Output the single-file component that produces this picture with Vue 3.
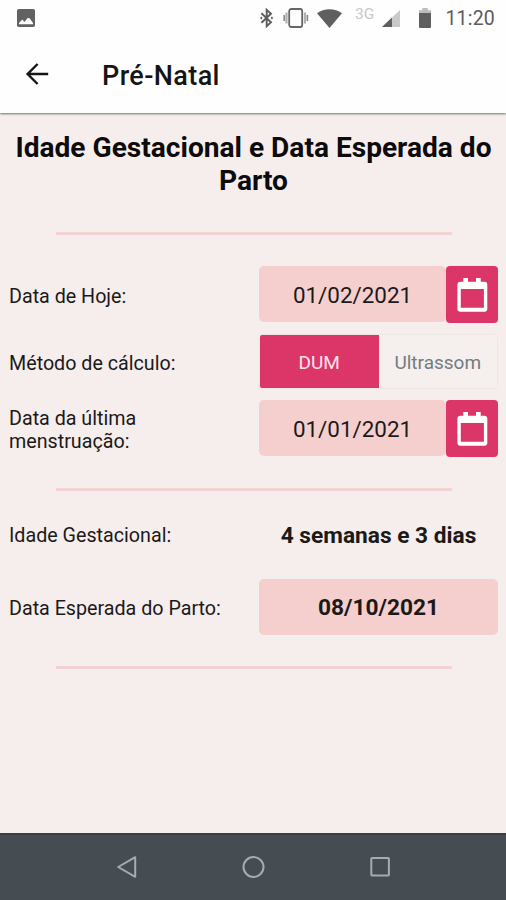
<script setup>
import { ref } from "vue";

const methods = ["DUM", "Ultrassom"];
const method = ref("DUM");

const today = ref("01/02/2021");
const lastPeriod = ref("01/01/2021");
const age = "4 semanas e 3 dias";
const dueDate = "08/10/2021";
</script>

<template>
  <div class="screen">
    <header class="top">
      <div class="status">
        <svg class="photo" width="18" height="18" viewBox="0 0 18 18">
          <rect width="18" height="18" rx="1.8" fill="#626262" />
          <path d="M2 15.3V14l3.3-3.5 2.2 2.5L10.6 9l2 .3L16 14v1.3z" fill="#fff" />
        </svg>
        <svg class="bluetooth" width="14" height="20" viewBox="0 0 14 20">
          <path
            d="M1.4 5.2l9.6 9.1L6.7 18.2V1.8L11 5.7l-9.6 9.1"
            fill="none"
            stroke="#5c5c5c"
            stroke-width="1.9"
          />
          <path d="M0 10l1.3-1.4L2.6 10l-1.3 1.4zM10.6 10l1.3-1.4 1.3 1.4-1.3 1.4z" fill="#5c5c5c" />
        </svg>
        <svg class="vibrate" width="26" height="20" viewBox="0 0 26 20">
          <rect x="6.2" y="1" width="13" height="18" rx="2" fill="none" stroke="#666" stroke-width="1.8" />
          <path d="M3.5 4.5v11M22 4.5v11" stroke="#b0b0b0" stroke-width="2.2" />
          <path d="M1.2 7v6M24.4 7v6" stroke="#888" stroke-width="1.6" />
        </svg>
        <svg class="wifi" width="25" height="19" viewBox="0 0 25 19">
          <path d="M0 4.2Q5.5.3 12.5.3T25 4.2L12.5 19z" fill="#5f5f5f" />
        </svg>
        <span class="network">3G</span>
        <svg class="signal" width="18" height="17" viewBox="0 0 18 17">
          <path d="M0 17L18 0v17z" fill="#c9c9c9" />
          <path d="M0 17L10 7.5V17z" fill="#5f5f5f" />
        </svg>
        <svg class="battery" width="12" height="20" viewBox="0 0 12 20">
          <path d="M0 2.2h3.2V0h5.6v2.2H12V6H0z" fill="#bdbdbd" />
          <path d="M0 5h12v13.8q0 1.2-1.2 1.2H1.2Q0 20 0 18.8z" fill="#5f5f5f" />
        </svg>
        <span class="clock">11:20</span>
      </div>
      <div class="toolbar">
        <svg width="24" height="24" viewBox="0 0 24 24">
          <path
            d="M23.2 12H2.6M12.6 2L2.6 12l10 10"
            fill="none"
            stroke="#151515"
            stroke-width="2.4"
          />
        </svg>
        <span class="title">Pré-Natal</span>
      </div>
    </header>

    <main>
      <h1>Idade Gestacional e Data Esperada do Parto</h1>
      <hr />
      <section class="inputs">
        <div class="row">
          <label>Data de Hoje:</label>
          <div class="date">
            <span class="value">{{ today }}</span>
            <button class="pick">
              <svg width="31" height="34" viewBox="0 0 31 34">
                <path
                  fill-rule="evenodd"
                  d="M6.3 0H11v3.8h8V0h4.7v3.8h3.6q3 0 3 3v24q0 3-3 3H3.4q-3 0-3-3v-24q0-3 3-3h2.9zM3.8 11v18.8h23.1V11z"
                  fill="#fff"
                />
              </svg>
            </button>
          </div>
        </div>
        <div class="row">
          <label>Método de cálculo:</label>
          <div class="segment">
            <button
              v-for="m in methods"
              :key="m"
              :class="['option', m === method ? 'active' : '']"
              @click="method = m"
            >
              {{ m }}
            </button>
          </div>
        </div>
        <div class="row">
          <label>Data da última menstruação:</label>
          <div class="date">
            <span class="value">{{ lastPeriod }}</span>
            <button class="pick">
              <svg width="31" height="34" viewBox="0 0 31 34">
                <path
                  fill-rule="evenodd"
                  d="M6.3 0H11v3.8h8V0h4.7v3.8h3.6q3 0 3 3v24q0 3-3 3H3.4q-3 0-3-3v-24q0-3 3-3h2.9zM3.8 11v18.8h23.1V11z"
                  fill="#fff"
                />
              </svg>
            </button>
          </div>
        </div>
      </section>
      <hr />
      <section class="results">
        <div class="row">
          <label>Idade Gestacional:</label>
          <strong>{{ age }}</strong>
        </div>
        <div class="row">
          <label>Data Esperada do Parto:</label>
          <strong class="due">{{ dueDate }}</strong>
        </div>
      </section>
      <hr />
    </main>

    <nav>
      <svg width="22" height="24" viewBox="0 0 22 24">
        <path d="M20.2 2.2v19.6L3.2 12z" />
      </svg>
      <svg width="24" height="24" viewBox="0 0 24 24">
        <circle cx="12.5" cy="12" r="10" />
      </svg>
      <svg width="22" height="24" viewBox="0 0 22 24">
        <rect x="2.3" y="3" width="17.6" height="17.6" rx="0.8" />
      </svg>
    </nav>
  </div>
</template>

<style>
body {
  margin: 0;
}
</style>

<style scoped>
.screen {
  display: flex;
  flex-direction: column;
  height: 900px;
  background-color: #f6eeec;
  color: #1c1919;
  font-family: Roboto, "Liberation Sans", sans-serif;
}

.screen svg {
  display: block;
  flex: none;
}

.top {
  height: 113px;
  background-color: #fefefe;
  box-shadow: 0 1px 2px #0008;
}

.status {
  display: flex;
  align-items: center;
  height: 36px;
  padding: 0 11px 0 17px;
}

.photo {
  margin-right: 225px;
}

.vibrate {
  margin-left: 9px;
}

.wifi {
  margin-left: 8px;
}

.network {
  width: 20px;
  margin: 0 7px 8px 13px;
  font-size: 15.5px;
  line-height: 18px;
  color: #c8c8c8;
}

.battery {
  margin-left: 19px;
}

.clock {
  margin-left: auto;
  padding-top: 1px;
  font-size: 19.5px;
  letter-spacing: 0.2px;
  color: #5c5c5c;
}

.toolbar {
  display: flex;
  align-items: center;
  height: 76px;
  padding-left: 25px;
}

.title {
  margin-left: 53px;
  padding-top: 4px;
  font-size: 27px;
  font-weight: 500;
  letter-spacing: 0.4px;
  color: #151515;
}

main {
  flex: 1;
  padding: 18px 8px 0;
}

h1 {
  margin: 0 -1px 35px 0;
  font-size: 28.1px;
  line-height: 33px;
  font-weight: 700;
  text-align: center;
  color: #0d0b0b;
}

hr {
  width: 396px;
  height: 3px;
  margin: 0 0 0 48px;
  border: none;
  background-color: #f4d2d3;
}

.inputs {
  display: grid;
  gap: 11px;
  padding: 31px 0;
}

.row {
  display: grid;
  grid-template-columns: 251px 239px;
  align-items: center;
}

label {
  width: 230px;
  padding: 4px 0 0 1px;
  box-sizing: border-box;
  font-size: 19.7px;
  line-height: 23px;
}

.inputs .row:last-child label {
  width: 160px;
  padding-top: 2px;
}

.date {
  display: flex;
  height: 57px;
}

.value {
  flex: 1;
  height: 56px;
  border-radius: 5px;
  background-color: #f4cfce;
  font-size: 22.4px;
  line-height: 58px;
  text-align: center;
}

button {
  display: flex;
  align-items: center;
  justify-content: center;
  padding: 0;
  border: none;
  font-family: inherit;
}

.pick {
  width: 52px;
  border-radius: 4px;
  background-color: #dc3568;
}

.segment {
  display: flex;
  box-sizing: border-box;
  height: 55px;
  border: 1px solid #ece6e4;
  border-radius: 4px;
}

.option {
  flex: 1;
  padding-top: 2px;
  background-color: #f5f0ee;
  color: #747a82;
  font-size: 19px;
}

.option.active {
  border-radius: 2px 0 0 2px;
  background-color: #dc3568;
  color: #fbe6ec;
}

.results {
  padding: 29px 0 31px;
}

.results .row:first-child {
  height: 31px;
  margin-bottom: 28px;
}

.results label {
  padding-top: 2px;
}

.results .row:first-child label {
  padding-top: 0;
}

strong {
  font-size: 22.7px;
  font-weight: 700;
  text-align: center;
}

.due {
  height: 56px;
  border-radius: 5px;
  background-color: #f4cfce;
  line-height: 58px;
}

nav {
  display: flex;
  justify-content: center;
  gap: 104px;
  box-sizing: border-box;
  height: 67px;
  padding-top: 20px;
  border-top: 2px solid #3b3d3e;
  background-color: #454d53;
}

nav svg {
  fill: none;
  stroke: #a5acb0;
  stroke-width: 2;
  stroke-linejoin: round;
}
</style>
